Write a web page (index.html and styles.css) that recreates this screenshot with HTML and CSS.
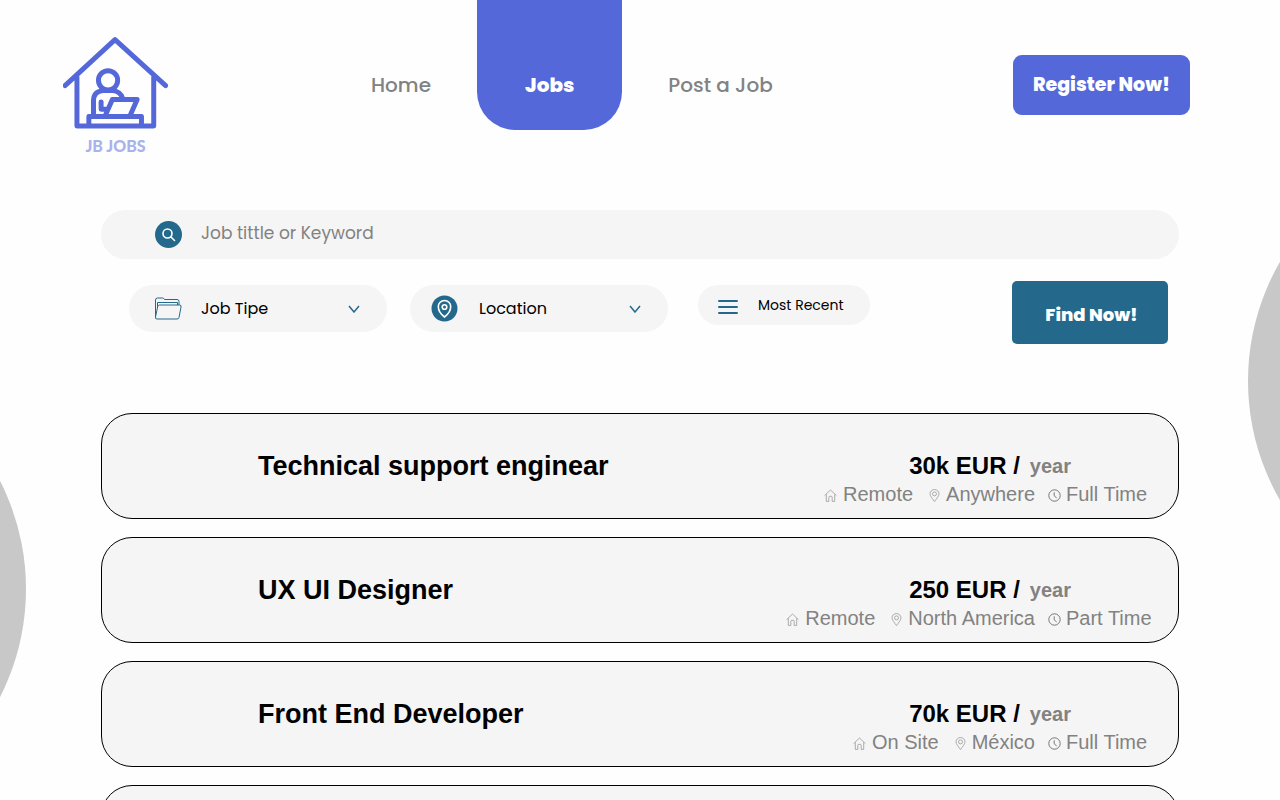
FILE: index.html
```html
<!DOCTYPE html>
<html lang="en">
<head>
<meta charset="utf-8">
<meta name="viewport" content="width=device-width, initial-scale=1">
<title>JB Jobs</title>
<link rel="stylesheet" href="styles.css">
</head>
<body>
<svg class="sprite" aria-hidden="true">
  <symbol id="home" viewBox="0 0 13 13"><path d="M.6 6.600 6.500 1l5.900 5.600M2.300 5.300v7.100h2.500V8.300q0-1 1-1h1.400q1 0 1 1v4.100h2.500V5.300"/></symbol>
  <symbol id="pin" viewBox="0 0 12 13"><path d="M6 12.600C4 9.700 1.500 7 1.500 4.900a4.500 4.400 0 0 1 9 0C10.500 7 8 9.700 6 12.600z"/><circle cx="6" cy="4.900" r="2"/></symbol>
  <symbol id="clock" viewBox="0 0 13 13"><circle cx="6.500" cy="6.500" r="5.700"/><path d="M6.200 3.300v3.500l2.500 2.200"/></symbol>
  <symbol id="chevron" viewBox="0 0 12 8"><path d="m1 1 5 6 5-6"/></symbol>
</svg>
<div class="page">
  <span class="blob blob-left"></span>
  <span class="blob blob-right"></span>

  <header class="header">
    <a class="logo" href="#">
      <svg viewBox="39 34 317 278" aria-hidden="true">
        <path d="M45 181 196 42 349 181M81 155V303H313V155"/>
        <circle cx="175" cy="165" r="29"/>
        <path d="M131 268V227q0-28 28-31H190q22 3 28 21M168 268 188 223H263L243 268M117 297V274H276V297M154 230V252H172"/>
      </svg>
      <span>JB JOBS</span>
    </a>
    <nav class="nav">
      <a href="#">Home</a>
      <a class="active" href="#" aria-current="page">Jobs</a>
      <a href="#">Post a Job</a>
    </nav>
    <button class="register" type="button">Register Now!</button>
  </header>

  <main class="main">
    <form class="search">
      <label class="keyword">
        <svg class="badge" viewBox="0 0 27 27" aria-hidden="true"><circle class="disc" cx="13.500" cy="13.500" r="13.500"/><circle cx="12.500" cy="12.500" r="4.500"/><path d="m16 16 3.500 3.500"/></svg>
        <input type="text" placeholder="Job tittle or Keyword" aria-label="Job title or keyword">
      </label>
      <div class="filters">
        <label class="pill">
          <svg class="folder" viewBox="0 0 28 23" aria-hidden="true"><path d="M1.500 20V3q0-2 2-2h5q1.500 0 2 1.500h12.500q2 0 2 2V8M3.500 10V5.500h20V8M5.500 8h20q2 0 1.500 2l-2 10.500q-.3 1.500-2 1.500H3q-2 0-1.500-2L3.700 9.500Q4 8 5.500 8z"/></svg>
          <select aria-label="Job type"><option>Job Tipe</option></select>
          <svg class="chevron" aria-hidden="true"><use href="#chevron"/></svg>
        </label>
        <label class="pill pill-location">
          <svg class="badge" viewBox="0 0 27 27" aria-hidden="true"><circle class="disc" cx="13.500" cy="13.500" r="13"/><path d="M13.500 22C9.500 19 7.300 15.500 7.300 11.500a6.200 6 0 0 1 12.400 0C19.700 15.500 17.500 19 13.500 22z"/><circle cx="13.500" cy="12" r="2.300"/></svg>
          <select aria-label="Location"><option>Location</option></select>
          <svg class="chevron" aria-hidden="true"><use href="#chevron"/></svg>
        </label>
        <button class="sort" type="button">
          <svg viewBox="0 0 20 16" aria-hidden="true"><path d="M1 2h18M1 8h18M1 14h18"/></svg>
          Most Recent
        </button>
        <button class="find" type="submit">Find Now!</button>
      </div>
    </form>

    <section class="jobs">
      <article class="job">
        <h2>Technical support enginear</h2>
        <div class="details">
          <p class="price">30k EUR / <span>year</span></p>
          <ul class="meta">
            <li><svg><use href="#home"/></svg>Remote</li>
            <li><svg><use href="#pin"/></svg>Anywhere</li>
            <li><svg class="clock"><use href="#clock"/></svg>Full Time</li>
          </ul>
        </div>
      </article>
      <article class="job">
        <h2>UX UI Designer</h2>
        <div class="details">
          <p class="price">250 EUR / <span>year</span></p>
          <ul class="meta">
            <li><svg><use href="#home"/></svg>Remote</li>
            <li><svg><use href="#pin"/></svg>North America</li>
            <li><svg class="clock"><use href="#clock"/></svg>Part Time</li>
          </ul>
        </div>
      </article>
      <article class="job">
        <h2>Front End Developer</h2>
        <div class="details">
          <p class="price">70k EUR / <span>year</span></p>
          <ul class="meta">
            <li><svg><use href="#home"/></svg>On Site</li>
            <li><svg><use href="#pin"/></svg>México</li>
            <li><svg class="clock"><use href="#clock"/></svg>Full Time</li>
          </ul>
        </div>
      </article>
      <article class="job"></article>
    </section>
  </main>
</div>
</body>
</html>
```
FILE: styles.css
```css
* {
  box-sizing: border-box;
}

body {
  margin: 0;
  background: #fefefe;
  color: #000;
  font-family: Poppins, Inter, sans-serif;
}

a {
  text-decoration: none;
}

button,
input,
select {
  border: 0;
  font-family: inherit;
}

svg {
  flex: none;
  fill: none;
}

.sprite {
  display: none;
}

.page {
  position: relative;
  height: 100vh;
  overflow: hidden;
}

/* Decorative circles behind the content */
.blob {
  position: absolute;
  width: 476px;
  height: 476px;
  border-radius: 50%;
  background: #c8c8c8;
}

.blob-left {
  top: 351px;
  right: calc(100% - 26px);
}

.blob-right {
  top: 143px;
  left: calc(100% - 32px);
}

.header {
  display: flex;
  align-items: flex-start;
  padding: 0 90px 0 63px;
}

.logo {
  display: flex;
  flex-direction: column;
  align-items: center;
  gap: 7px;
  padding-top: 37px;
  color: #a9b2ec;
  font: 900 16px/20px Lato, sans-serif;
}

.logo svg {
  width: 105px;
  height: 92px;
  stroke: #5468da;
  stroke-width: 15;
  stroke-linecap: round;
  stroke-linejoin: round;
}

.nav {
  display: flex;
  gap: 46px;
  margin-left: 203px;
}

.nav a {
  padding: 70px 0 30px;
  color: #828282;
  font-size: 20px;
  font-weight: 500;
  line-height: 30px;
}

.nav .active {
  padding-inline: 48px;
  border-radius: 0 0 38px 38px;
  background: #5468da;
  color: #fff;
  font-weight: 800;
}

.register {
  margin: 55px 0 0 auto;
  padding: 15px 20px;
  border-radius: 9px;
  background: #5468da;
  color: #fff;
  font-size: 19px;
  font-weight: 800;
  line-height: 30px;
}

.main {
  padding: 54px 101px 0;
}

.keyword {
  display: flex;
  align-items: center;
  gap: 19px;
  height: 49px;
  padding: 0 54px;
  border-radius: 25px;
  background: #f5f5f5;
}

.keyword input {
  flex: 1;
  padding: 0 0 3px;
  outline: 0;
  background: none;
  font-size: 17px;
  line-height: 26px;
}

.keyword input::placeholder {
  color: #828282;
  opacity: 1;
}

.badge {
  width: 27px;
  height: 27px;
  stroke: #fff;
  stroke-width: 1.6;
  stroke-linecap: round;
}

.badge .disc {
  fill: #24698c;
  stroke: none;
}

.filters {
  display: flex;
  align-items: flex-start;
  margin-top: 22px;
  padding: 0 11px 0 28px;
}

.pill {
  display: flex;
  align-items: center;
  gap: 19px;
  width: 258px;
  height: 47px;
  margin: 4px 23px 0 0;
  padding: 0 27px 0 25px;
  border-radius: 24px;
  background: #f5f5f5;
}

.pill-location {
  gap: 21px;
  margin-right: 30px;
  padding-left: 21px;
}

.pill select {
  flex: 1;
  min-width: 0;
  padding: 0;
  appearance: none;
  background: none;
  color: #000;
  font-size: 16px;
  line-height: 26px;
}

.folder {
  width: 28px;
  height: 23px;
  stroke: #24698c;
}

.chevron {
  width: 12px;
  height: 8px;
  stroke: #24698c;
  stroke-width: 1.5;
}

.sort {
  display: flex;
  align-items: center;
  gap: 20px;
  height: 40px;
  margin-top: 4px;
  padding: 0 26px 0 20px;
  border-radius: 20px;
  background: #f5f5f5;
  color: #000;
  font-size: 14px;
}

.sort svg {
  width: 20px;
  height: 16px;
  margin-top: 4px;
  stroke: #24698c;
  stroke-width: 2;
  stroke-linecap: round;
}

.find {
  width: 156px;
  height: 63px;
  margin-left: auto;
  padding: 3px 0 0 3px;
  border-radius: 5px;
  background: #24698c;
  color: #fff;
  font-size: 18px;
  font-weight: 800;
}

.jobs {
  display: grid;
  gap: 18px;
  margin-top: 69px;
}

.job {
  position: relative;
  display: flex;
  align-items: center;
  justify-content: space-between;
  min-height: 106px;
  padding: 0 26px 0 156px;
  border: 1px solid #000;
  border-radius: 31px;
  background: #f5f5f5;
  font-family: "Liberation Sans", Arial, sans-serif;
}

.job h2 {
  margin: 0;
  font-size: 27px;
  line-height: 32px;
}

.details {
  display: flex;
  flex-direction: column;
  align-items: flex-end;
  padding-top: 27px;
}

.price {
  display: flex;
  gap: 10px;
  margin: 0 81px 0 0;
  font-size: 24px;
  font-weight: bold;
  line-height: 28px;
}

.price span {
  color: #828282;
  font-size: 20px;
}

.meta {
  display: flex;
  gap: 13px;
  margin: 0;
  padding: 0;
  color: #828282;
  font-size: 20px;
  line-height: 28px;
  list-style: none;
}

.meta li {
  display: flex;
  align-items: center;
  gap: 5px;
}

.meta li:first-child {
  gap: 6px;
  margin-right: 2px;
}

.meta li:last-child {
  width: 104px;
}

.meta svg {
  width: 13px;
  height: 13px;
  margin-top: 3px;
  stroke: #999;
  stroke-width: 0.8;
}

.meta .clock {
  stroke: #777;
  stroke-width: 1;
}
```
